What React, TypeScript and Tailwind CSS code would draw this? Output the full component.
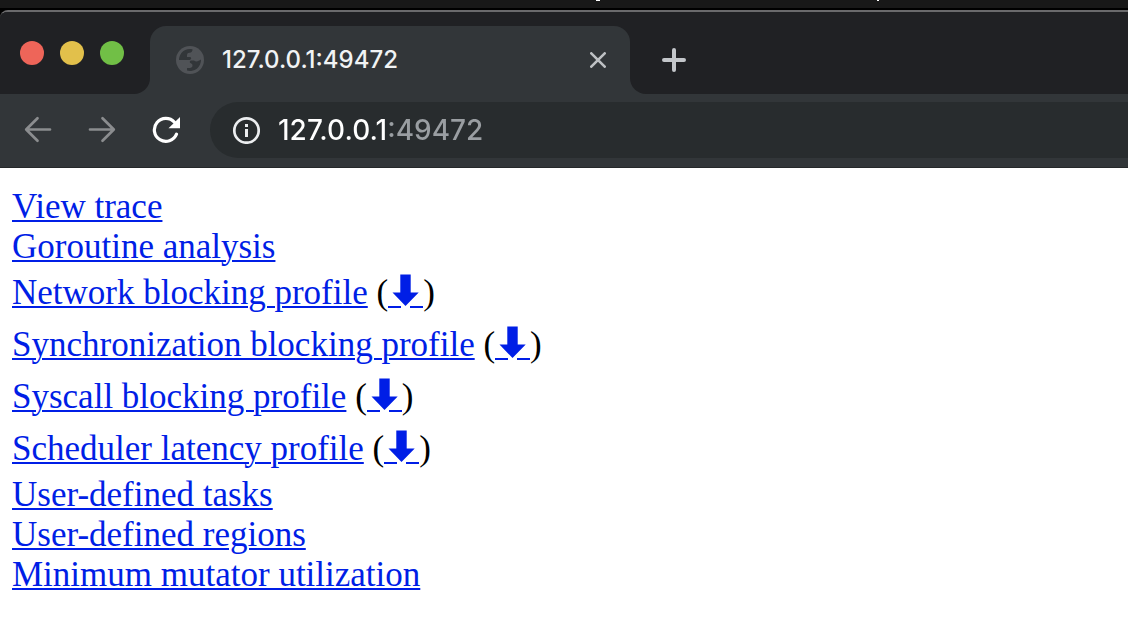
import React from "react";

type Entry = { label: string; download?: boolean };

const entries: Entry[] = [
  { label: "View trace" },
  { label: "Goroutine analysis" },
  { label: "Network blocking profile", download: true },
  { label: "Synchronization blocking profile", download: true },
  { label: "Syscall blocking profile", download: true },
  { label: "Scheduler latency profile", download: true },
  { label: "User-defined tasks" },
  { label: "User-defined regions" },
  { label: "Minimum mutator utilization" },
];

function Globe() {
  return (
    <svg viewBox="0 0 28 28" className="h-7 w-7 shrink-0" aria-hidden="true">
      <circle cx="14" cy="14" r="14" fill="#505357" />
      <path
        d="M3 14A11 11 0 0 1 16.500 3.200C16.500 5.500 15.500 6.500 13.500 6.800C11.500 7 11 8 11 9.500V11H14C15 11 15.500 12 15 13C14.500 14 13 14 12 14Z"
        fill="#323639"
      />
      <path
        d="M25 13.500A11 11 0 0 1 11 24.600V22H13.500C15.500 22 16.500 21 16.500 19.500C16.500 18 15.500 17.500 14.500 17C13.500 16.500 13.500 15 15 14.500H18C20.500 16.500 22.500 15 25 13.500Z"
        fill="#323639"
      />
    </svg>
  );
}

function DownArrow() {
  return (
    <svg viewBox="0 0 35 34" className="inline-block h-[34px] w-[35px] align-[-4px]" fill="currentColor" aria-hidden="true">
      <path d="M12.300 0.500H22.700V18.500H30.700L17.500 32 4.500 18.500H12.300Z" />
      <path d="M0 32H13V34H0ZM22 32H35V34H22Z" />
    </svg>
  );
}

function TabStrip() {
  return (
    <header className="flex h-[82px] items-end bg-[#202124]">
      <div className="flex w-[150px] shrink-0 self-stretch bg-[#323639]">
        <div className="flex flex-1 items-center gap-4 rounded-br-2xl bg-[#202124] pl-5">
          <button aria-label="Close window" className="h-6 w-6 rounded-full bg-[#ee6559]" />
          <button aria-label="Minimize window" className="h-6 w-6 rounded-full bg-[#e2c04b]" />
          <button aria-label="Zoom window" className="h-6 w-6 rounded-full bg-[#71bf46]" />
        </div>
      </div>
      <div className="flex self-stretch bg-[#202124] pt-3.5">
        <div className="flex w-[480px] items-center rounded-t-2xl bg-[#323639] pr-5 pl-[26px]">
          <Globe />
          <span className="ml-[18px] flex-1 text-2xl font-medium text-[#f1f3f4]">127.0.0.1:49472</span>
          <button aria-label="Close tab" className="p-1">
            <svg viewBox="0 0 16 16" className="h-4 w-4" fill="none" stroke="#bdc0c3" strokeWidth="2.600" strokeLinecap="round">
              <path d="M1.300 1.300 14.700 14.700M14.700 1.300 1.300 14.700" />
            </svg>
          </button>
        </div>
      </div>
      <div className="flex flex-1 self-stretch bg-[#323639]">
        <div className="flex flex-1 items-center rounded-bl-2xl bg-[#202124] pt-3.5 pl-8">
          <button aria-label="New tab">
            <svg viewBox="0 0 24 24" className="h-6 w-6" fill="none" stroke="#c3c6ca" strokeWidth="4" strokeLinecap="round">
              <path d="M2 12h20M12 2v20" />
            </svg>
          </button>
        </div>
      </div>
    </header>
  );
}

function Toolbar() {
  return (
    <nav className="flex items-center border-b border-[#25282a] bg-[#323639] pt-2 pb-[9px] pl-6">
      <button aria-label="Back" className="mr-9">
        <svg viewBox="0 0 28 28" className="h-7 w-7" fill="none" stroke="#8b8d8f" strokeWidth="2.700" strokeLinecap="round" strokeLinejoin="round">
          <path d="M26 13.500H2.500M13.500 2.200 2.200 13.500l11.300 11.300" />
        </svg>
      </button>
      <button aria-label="Forward" className="mr-9">
        <svg viewBox="0 0 28 28" className="h-7 w-7" fill="none" stroke="#8b8d8f" strokeWidth="2.700" strokeLinecap="round" strokeLinejoin="round">
          <path d="M2 13.500h23.500M14.500 2.200 25.800 13.500 14.500 24.800" />
        </svg>
      </button>
      <button aria-label="Reload" className="mr-[30px]">
        <svg viewBox="0 0 28 28" className="h-7 w-7">
          <path d="M24.500 18.200A11.500 11.500 0 1 1 22.500 6.300" fill="none" stroke="#fff" strokeWidth="3.200" strokeLinecap="round" />
          <path d="M28 1v11.300H16.500Z" fill="#fff" />
        </svg>
      </button>
      <div className="flex h-14 flex-1 items-center rounded-l-full bg-[#282c2e] pl-[22px]">
        <button aria-label="View site information" className="mr-[18px]">
          <svg viewBox="0 0 28 28" className="h-7 w-7">
            <circle cx="14.500" cy="14.500" r="12.200" fill="none" stroke="#eceef0" strokeWidth="2.700" />
            <path d="M13 8h3v3h-3ZM13 13h3v8h-3Z" fill="#eceef0" />
          </svg>
        </button>
        <input
          aria-label="Address"
          defaultValue="127.0.0.1:49472"
          className="min-w-0 flex-1 bg-[linear-gradient(to_right,#ffffff_110px,#9a9ea2_110px)] bg-clip-text text-[28px] leading-9 font-medium text-transparent outline-none"
        />
      </div>
    </nav>
  );
}

export default function App() {
  return (
    <div className="flex min-h-screen flex-col bg-white font-['Inter',sans-serif]">
      <div className="h-2.5 border-b-2 border-black bg-[#181818]">
        <div className="flex pl-[596px]">
          <i className="mr-[277px] h-px w-1 bg-white" />
          <i className="h-px w-0.5 bg-white" />
        </div>
      </div>
      <div className="bg-black">
        <div className="overflow-hidden rounded-tl-lg border-t-2 border-[#6a6a6c]">
          <TabStrip />
        </div>
      </div>
      <Toolbar />
      <main className="px-3 pt-[19px] font-['Liberation_Serif',serif] text-[35px] leading-10 text-black">
        <ul>
          {entries.map(({ label, download }) => (
            <li key={label} className={download ? "leading-[52px]" : "leading-10"}>
              <a href="#" className="text-[#001ee6] underline decoration-2 underline-offset-2">
                {label}
              </a>
              {download && (
                <>
                  {" ("}
                  <a href="#" aria-label={"Download " + label} className="text-[#001ee6]">
                    <DownArrow />
                  </a>
                  )
                </>
              )}
            </li>
          ))}
        </ul>
      </main>
    </div>
  );
}
